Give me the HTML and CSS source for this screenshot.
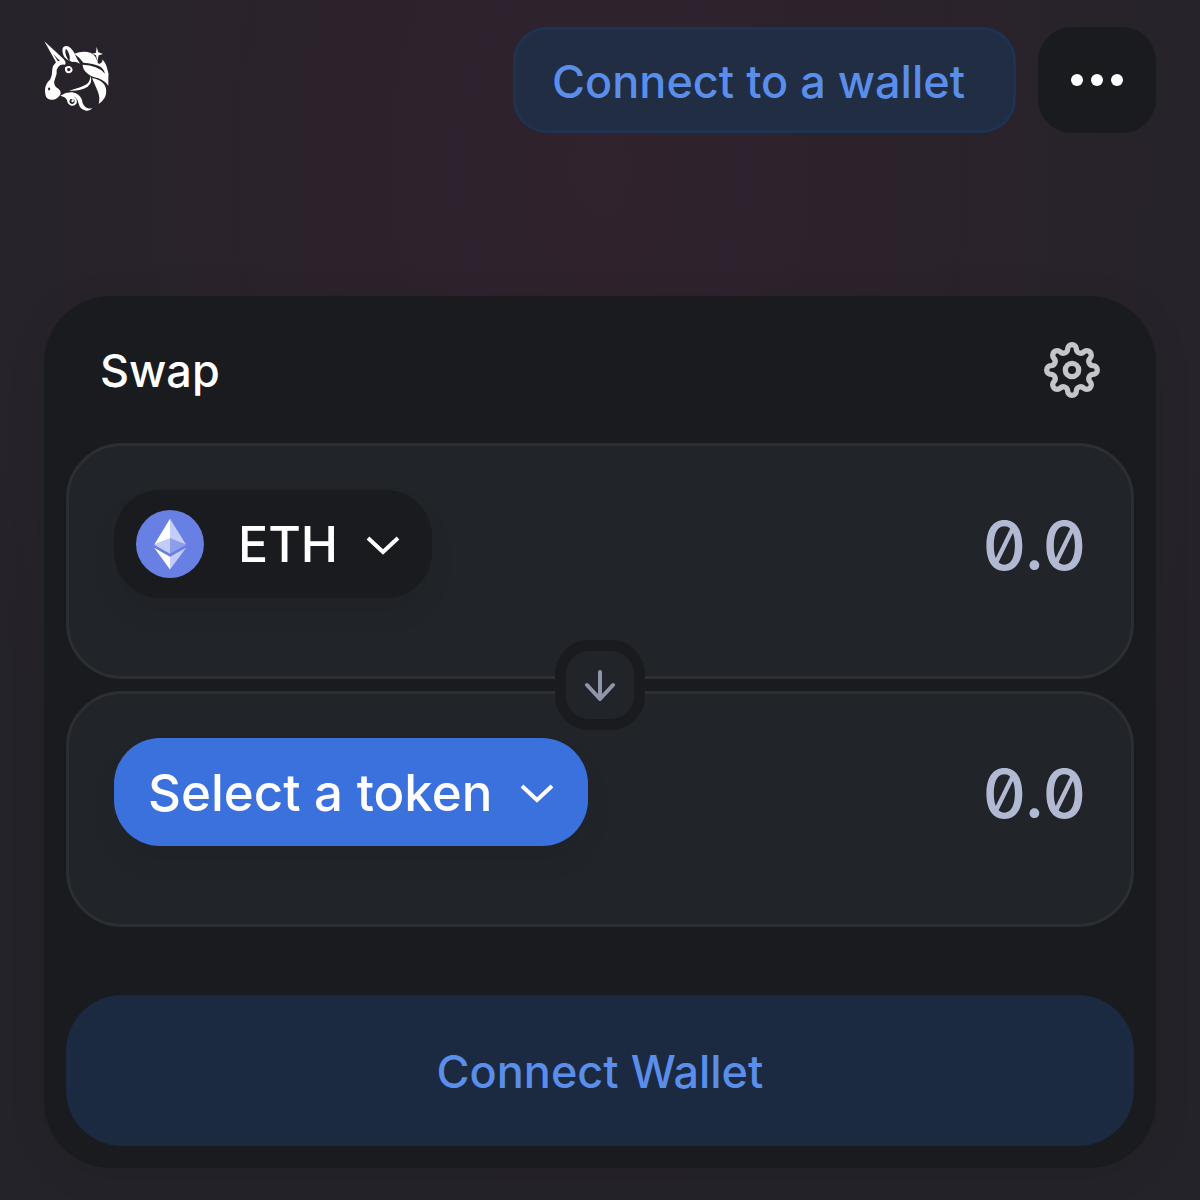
FILE: index.html
```html
<!DOCTYPE html>
<html lang="en">
<head>
<meta charset="utf-8">
<meta name="viewport" content="width=device-width, initial-scale=1">
<title>Swap</title>
<link rel="stylesheet" href="styles.css">
</head>
<body>
<header class="topbar">
  <a class="brand" href="#" aria-label="Home">
    <svg class="logo" viewBox="42 34 198 210" fill="#fff" aria-hidden="true">
      <path d="M43 35 L100 87 Q110 97 105 105 Q98 103 91 106 Q83 111 80 121 Q82 134 75 148 Q70 157 74 166 Q77 174 86 178 Q93 183 92 192 Q86 206 70 210 Q60 212 52 206 Q45 200 45 180 Q46 163 61 149 Q67 136 67 119 Q68 107 78 98 Z M70 74 L84 95 Q87 93 90 94 Z M57 173 Q52 176 55 182 Q59 183 61 179 Q61 174 57 173 Z" fill-rule="evenodd"/>
      <path d="M98 55 Q104 45 117 51 Q130 60 136 77 Q141 90 150 102 Q137 95 127 97 L119 93 Q121 82 117 72 Q113 61 108 57 Q104 63 108 77 Q111 87 117 93 Q102 86 99 73 Q96 63 98 55 Z"/>
      <path d="M133 72 Q158 63 181 69 Q190 72 196 81 L201 92 Q204 94 203 101 Q212 104 215 98 Q220 94 214 87 Q229 99 232 119 Q237 132 235 145 L235 168 Q225 153 203 145 Q181 140 170 129 Q158 119 158 105 Q180 106 197 113 Q214 119 225 132 Q221 115 207 109 Q191 101 160 99 Q150 84 133 72 Z"/>
      <path d="M186 145 Q213 150 224 166 Q233 184 225 203 Q217 217 206 223 Q211 205 204 187 Q194 163 186 145 Z"/>
      <path d="M181 138 Q189 158 173 171 Q151 185 117 183 Q147 176 164 167 Q181 159 181 138 Z"/>
      <path d="M91 198 Q108 187 127 188 Q150 193 156 211 Q158 231 174 236 Q181 238 188 234 Q180 245 168 243 Q151 240 146 223 Q143 206 131 200 Q143 208 140 221 Q132 232 121 227 Q111 221 111 211 Q106 201 91 198 Z M122 208 Q116 214 120 220 Q127 226 133 219 Q136 211 129 206 Q134 213 130 217 Q125 219 124 215 Q124 211 128 211 Q126 207 122 208 Z" fill-rule="evenodd"/>
      <path d="M105 113 Q111 109 119 109 Q128 113 128 121 Q125 131 115 131 Q106 129 105 120 Z M112 116 Q110 124 116 125 Q122 124 122 117 Q117 113 112 116 Z" fill-rule="evenodd"/>
      <path d="M200 52 L205 68 L219 73 L206 77 L202 95 L198 77 L187 72 L198 69 Z"/>
    </svg>
  </a>
  <div class="actions">
    <button class="connect-small" type="button">Connect to a wallet</button>
    <button class="more" type="button" aria-label="More">
      <svg viewBox="0 0 52 12" width="52" height="12" fill="#fff" aria-hidden="true"><circle cx="6" cy="6" r="6"/><circle cx="26" cy="6" r="6"/><circle cx="46" cy="6" r="6"/></svg>
    </button>
  </div>
</header>
<main class="card">
  <div class="card-head">
    <h1 class="title">Swap</h1>
    <button class="settings" type="button" aria-label="Settings">
      <svg viewBox="-84 -84 168 168" width="56" height="56" fill="none" stroke="#c3c5cb" stroke-width="16" stroke-linejoin="round" aria-hidden="true">
        <path d="M-13-63A13 13 0 0 1 13-63A13 13 0 0 0 35-54A13 13 0 0 1 54-35A13 13 0 0 0 63-13A13 13 0 0 1 63 13A13 13 0 0 0 54 35A13 13 0 0 1 35 54A13 13 0 0 0 13 63A13 13 0 0 1-13 63A13 13 0 0 0-35 54A13 13 0 0 1-54 35A13 13 0 0 0-63 13A13 13 0 0 1-63-13A13 13 0 0 0-54-35A13 13 0 0 1-35-54A13 13 0 0 0-13-63Z"/>
        <circle r="20"/>
      </svg>
    </button>
  </div>
  <div class="panels">
    <section class="panel">
      <button class="token" type="button">
        <svg class="coin" viewBox="0 0 202 202" width="68" height="68" aria-hidden="true">
          <circle cx="101" cy="101" r="101" fill="#687fe3"/>
          <path d="M101 26L54 103L101 85Z" fill="#fff"/>
          <path d="M101 26L149 103L101 85Z" fill="#c4cdf5"/>
          <path d="M54 103L101 84V130Z" fill="#c4cdf5"/>
          <path d="M149 103L101 84V130Z" fill="#8d9eeb"/>
          <path d="M54 112L101 139V177Z" fill="#fff"/>
          <path d="M149 112L101 139V177Z" fill="#c4cdf5"/>
        </svg>
        <span class="symbol">ETH</span>
        <svg class="chevron" viewBox="0 0 34 22" width="34" height="22" aria-hidden="true"><path d="M2 5L17 19L32 5"/></svg>
      </button>
      <input class="amount" type="text" inputmode="decimal" placeholder="0.0" aria-label="Amount to pay">
    </section>
    <button class="flip" type="button" aria-label="Switch tokens">
      <svg viewBox="0 0 32 32" width="32" height="32" fill="none" stroke="#8f96ac" stroke-width="4" stroke-linecap="round" stroke-linejoin="round" aria-hidden="true"><path d="M16 3V30M3 16L16 30L29 16"/></svg>
    </button>
    <section class="panel">
      <button class="token token-select" type="button">
        <span>Select a token</span>
        <svg class="chevron" viewBox="0 0 34 22" width="34" height="22" aria-hidden="true"><path d="M2 5L17 19L32 5"/></svg>
      </button>
      <input class="amount" type="text" inputmode="decimal" placeholder="0.0" aria-label="Amount to receive">
    </section>
  </div>
  <button class="connect-large" type="button">Connect Wallet</button>
</main>
</body>
</html>
```
FILE: styles.css
```css
* {
  box-sizing: border-box;
}

body {
  margin: 0;
  min-height: 100vh;
  padding: 27px 44px 32px;
  background: radial-gradient(ellipse 720px 1100px at 50% 14%, #30222e 0%, #242329 100%);
  color: #fff;
  font-family: Inter, "Liberation Sans", sans-serif;
  font-size: 45px;
  font-weight: 500;
}

button {
  display: flex;
  align-items: center;
  justify-content: center;
  margin: 0;
  padding: 0;
  border: 0;
  background: none;
  color: inherit;
  font: inherit;
  white-space: nowrap;
  cursor: pointer;
}

svg {
  display: block;
  flex: none;
}

.topbar {
  display: flex;
  align-items: center;
  justify-content: space-between;
  margin-bottom: 163px;
}

.logo {
  width: 66px;
  height: 70px;
  margin-bottom: 8px;
}

.actions {
  display: flex;
  gap: 22px;
}

.connect-small {
  height: 106px;
  padding: 2px 48px 0 36px;
  border: 3px solid #1e3252;
  border-radius: 34px;
  background: #202d43;
  color: #5a8eea;
}

.more {
  width: 118px;
  height: 106px;
  border-radius: 34px;
  background: #191b1f;
}

.card {
  padding: 22px;
  border-radius: 67px;
  background: #191b1f;
  box-shadow: 0 8px 40px rgba(0, 0, 0, 0.08);
}

.card-head {
  display: flex;
  align-items: center;
  justify-content: space-between;
  height: 103px;
  margin-bottom: 22px;
  padding: 0 34px;
}

.title {
  margin: 0;
  padding-top: 2px;
  font-size: 45px;
  font-weight: 500;
}

.panels {
  position: relative;
  display: grid;
  grid-template-columns: minmax(0, 1fr);
  gap: 12px;
}

.panel {
  display: flex;
  align-items: flex-start;
  justify-content: space-between;
  height: 236px;
  padding: 44px 45px;
  border: 3px solid #2b2e33;
  border-radius: 56px;
  background: #212429;
}

.token {
  flex: none;
  height: 108px;
  padding: 0 32px 0 22px;
  border-radius: 46px;
  background: #191b1f;
  box-shadow: 0 16px 28px rgba(0, 0, 0, 0.06);
  font-size: 50px;
}

.symbol {
  margin-left: 34px;
}

.chevron {
  margin-left: 28px;
  fill: none;
  stroke: #fff;
  stroke-width: 4;
}

.token-select {
  padding: 0 34px;
  background: #3b71dd;
  font-size: 51px;
}

.amount {
  flex: 1;
  width: 0;
  min-width: 0;
  height: 108px;
  padding: 2px 0 0;
  border: 0;
  outline: 0;
  background: none;
  color: #fff;
  font: 500 67px Inter, "Liberation Sans", sans-serif;
  font-feature-settings: "zero";
  text-align: right;
}

.amount::placeholder {
  color: #b2b9d2;
  opacity: 1;
}

.flip {
  position: absolute;
  top: 50%;
  left: 50%;
  width: 90px;
  height: 90px;
  border: 11px solid #191b1f;
  border-radius: 34px;
  background: #212429;
  transform: translate(-50%, -50%);
}

.connect-large {
  width: 100%;
  height: 151px;
  margin-top: 68px;
  padding-top: 2px;
  border-radius: 56px;
  background: #1b2a41;
  color: #5a8eea;
}
```
